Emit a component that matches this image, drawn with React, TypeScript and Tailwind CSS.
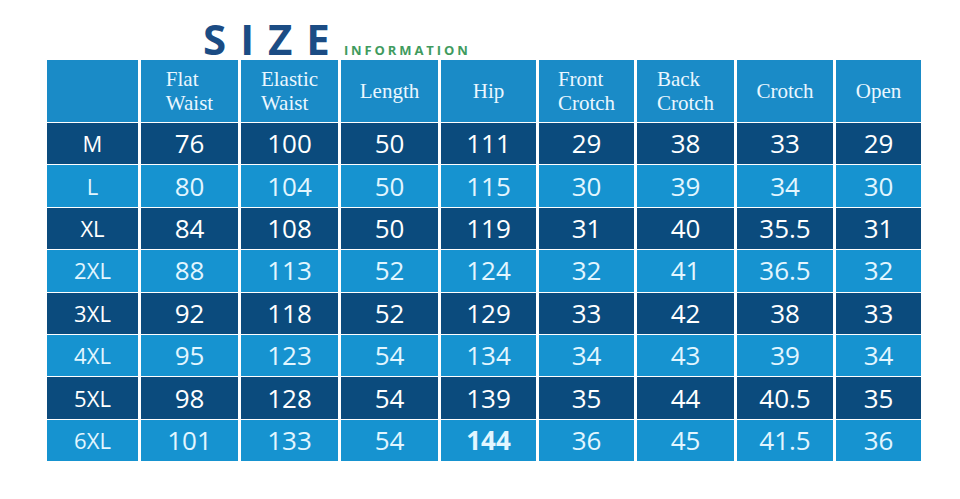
const headers: string[][] = [
  [],
  ['Flat', 'Waist'],
  ['Elastic', 'Waist'],
  ['Length'],
  ['Hip'],
  ['Front', 'Crotch'],
  ['Back', 'Crotch'],
  ['Crotch'],
  ['Open'],
];

const rows: string[][] = [
  ['M', '76', '100', '50', '111', '29', '38', '33', '29'],
  ['L', '80', '104', '50', '115', '30', '39', '34', '30'],
  ['XL', '84', '108', '50', '119', '31', '40', '35.5', '31'],
  ['2XL', '88', '113', '52', '124', '32', '41', '36.5', '32'],
  ['3XL', '92', '118', '52', '129', '33', '42', '38', '33'],
  ['4XL', '95', '123', '54', '134', '34', '43', '39', '34'],
  ['5XL', '98', '128', '54', '139', '35', '44', '40.5', '35'],
  ['6XL', '101', '133', '54', '144', '36', '45', '41.5', '36'],
];

export default function App() {
  return (
    <div className="w-[960px] h-[499px] bg-white overflow-hidden">
      {/* title */}
      <div className="h-[60px] flex items-end pl-[203px]">
        <div className="flex items-baseline">
          <span className="font-['Open_Sans',sans-serif] font-bold text-[42px] leading-none tracking-[14px] text-[#1b4c84]">
            SIZE
          </span>
          <span className="font-['Open_Sans',sans-serif] font-bold text-[13px] leading-none tracking-[2.9px] text-[#3f9b5e]">
            INFORMATION
          </span>
        </div>
      </div>

      {/* table */}
      <div className="ml-[47px] w-[875px] grid grid-cols-[91px_97px_97px_97px_95px_95px_97px_96px_85px] grid-rows-[62px_repeat(8,41.4px)] gap-x-[3px] gap-y-px bg-white">
        {headers.map((lines, i) => (
          <div key={'h' + i} className="bg-[#1a8bc7] flex items-center justify-center">
            <div className="text-left font-['Liberation_Serif',serif] text-[21px] leading-[24px] text-[#eaf7ff]">
              {lines.map((l) => (
                <div key={l}>{l}</div>
              ))}
            </div>
          </div>
        ))}
        {rows.map((row, r) =>
          row.map((cell, c) => {
            const dark = r % 2 === 0;
            return (
              <div
                key={r + '-' + c}
                className={`flex items-center justify-center font-['Open_Sans',sans-serif] ${
                  dark ? 'bg-[#0b4b7d] text-white' : 'bg-[#1693d0] text-[#e2f6ff]'
                } ${c === 0 ? 'text-[22px] font-medium' : 'text-[26px]'} ${
                  r === 7 && c === 4 ? 'font-bold' : ''
                }`}
              >
                {cell}
              </div>
            );
          })
        )}
      </div>
    </div>
  );
}
